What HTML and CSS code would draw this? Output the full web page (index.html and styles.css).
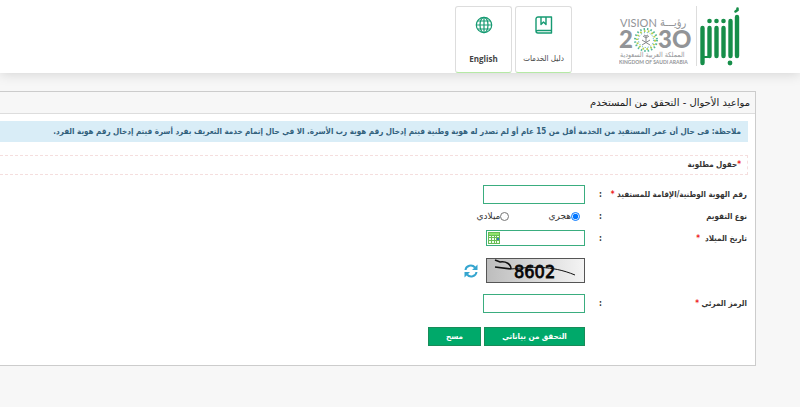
FILE: index.html
```
<!DOCTYPE html>
<html lang="ar" dir="rtl">
<head>
  <meta charset="utf-8">
  <title>مواعيد الأحوال - التحقق من المستخدم</title>
  <link rel="stylesheet" href="styles.css">
</head>
<body>
  <header class="header">
    <div class="logos">
      <svg class="absher" viewBox="0 0 40 60" role="img" aria-label="أبشر">
        <g fill="none" stroke="#168e49" stroke-width="4.4" stroke-linecap="round">
          <path d="M2.500 22V57"/>
          <path d="M9.500 22V50"/>
          <path d="M16.500 22V50"/>
          <path d="M23.500 22V50"/>
          <path d="M30.500 15V50"/>
          <path d="M37 11V50"/>
          <path d="M3 51H8" stroke-width="2"/>
          <path d="M35.500 5.500L37.500 4V2.500" stroke-width="2.600"/>
        </g>
        <g fill="#168e49">
          <circle cx="9.500" cy="15" r="2.300"/>
          <circle cx="16.500" cy="15" r="2.300"/>
          <circle cx="23.500" cy="15" r="2.300"/>
          <circle cx="30" cy="57" r="2.400"/>
        </g>
      </svg>
      <svg class="vision" viewBox="0 0 74 52" direction="ltr" role="img" aria-label="رؤية 2030">
        <g fill="#929497">
          <text x="1" y="13" font-size="11">VISION</text>
          <text class="ar" x="41" y="12" font-size="11">رؤيـــة</text>
          <text x="0" y="34" font-size="24" font-weight="900">2</text>
          <text x="39" y="34" font-size="24" font-weight="900">3O</text>
          <text class="ar" x="1" y="43" font-size="7">المملكة العربية السعودية</text>
          <text x="0" y="50" font-size="5" font-weight="bold">KINGDOM OF SAUDI ARABIA</text>
        </g>
        <g fill="none" stroke-width="2">
          <circle cx="27" cy="26" r="11" stroke="#56b99c" stroke-dasharray="1.5 2"/>
          <circle cx="27" cy="26" r="9" stroke="#b5cf4b" stroke-dasharray="1.6 2.4"/>
          <circle cx="27" cy="26" r="7.5" stroke="#3aa3c4" stroke-width="1" stroke-dasharray="1 2"/>
        </g>
        <g fill="none" stroke="#85888b">
          <path d="M27 28V22M27 24L24 22M27 24L30 22M25 21L27 22L29 21"/>
          <path d="M23 31L31 26M31 31L23 26"/>
        </g>
      </svg>
    </div>
    <nav class="nav">
      <a class="tile" href="#">
        <svg class="tile-icon" viewBox="0 0 18 18" fill="none" stroke="#169a72" stroke-width="1.4" stroke-linejoin="round">
          <path d="M16.500 14.500V1H3C2 1 1 1.700 1 3V15C1 16.500 2 17 3 17H16.500V14.500H3C1.800 14.500 1 15 1 15.700"/>
          <path d="M6 1V8.500L8.500 6L11 8.500V1"/>
        </svg>
        <span>دليل الخدمات</span>
      </a>
      <a class="tile" href="#">
        <svg class="tile-icon" viewBox="0 0 18 18" fill="none" stroke="#169a72" stroke-width="1.2">
          <circle cx="9" cy="9" r="7.700"/>
          <ellipse cx="9" cy="9" rx="4" ry="7.700"/>
          <path d="M9 1V17M1.300 9H16.700M2.500 5H15.500M2.500 13H15.500"/>
        </svg>
        <span class="english" lang="en">English</span>
      </a>
    </nav>
  </header>

  <main class="panel">
    <h1 class="panel-title">مواعيد الأحوال - التحقق من المستخدم</h1>
    <div class="panel-body">
      <p class="note">ملاحظة: فى حال أن عمر المستفيد من الخدمة أقل من 15 عام أو لم تصدر له هوية وطنية فيتم إدخال رقم هوية رب الأسرة. الا في حال إتمام خدمة التعريف بفرد أسرة فيتم إدخال رقم هوية الفرد.</p>
      <p class="required-note"><span class="star">*</span>حقول مطلوبة</p>

      <form class="form">
        <div class="row">
          <label class="label" for="id-number">رقم الهوية الوطنية/الإقامة للمستفيد <span class="star">*</span></label>
          <span class="colon">:</span>
          <input class="text-input" type="text" id="id-number">
        </div>
        <div class="row" role="radiogroup" aria-labelledby="calendar-label">
          <span class="label" id="calendar-label">نوع التقويم</span>
          <span class="colon">:</span>
          <div class="radios">
            <label class="radio"><input type="radio" name="calendar" checked>هجري</label>
            <label class="radio"><input type="radio" name="calendar">ميلادي</label>
          </div>
        </div>
        <div class="row">
          <label class="label" for="birth-date">تاريخ الميلاد &nbsp;<span class="star">*</span></label>
          <span class="colon">:</span>
          <div class="date-box">
            <input class="date-input" type="text" id="birth-date">
            <button class="icon-button" type="button" aria-label="التقويم">
              <svg class="calendar-icon" viewBox="0 0 12 12">
                <rect width="12" height="12" fill="#69bd55"/>
                <rect x="1" y="1" width="10" height="2" fill="#8ee36c"/>
                <path d="M1 4h2v1H1zM4 4h2v1H4zM7 4h1v1H7zM9 4h2v1H9zM1 6h2v2H1zM4 6h2v2H4zM7 6h1v2H7zM1 9h2v2H1zM4 9h2v2H4zM7 9h1v2H7zM9 9h2v2H9z" fill="#f2fff0"/>
                <path d="M9 6h2v2H9z" fill="#3976c8"/>
              </svg>
            </button>
          </div>
        </div>
        <div class="row captcha-row">
          <svg class="captcha" viewBox="0 0 99 25" direction="ltr" role="img" aria-label="8602">
            <defs>
              <linearGradient id="shade">
                <stop offset="0" stop-color="#bdbdbd"/>
                <stop offset="1" stop-color="#f4f4f4"/>
              </linearGradient>
            </defs>
            <rect x="0.500" y="0.500" width="98" height="24" fill="url(#shade)" stroke="#555"/>
            <text x="28" y="20" font-size="18" stroke="#0b0b0b" stroke-width="0.800">8602</text>
            <path d="M9 2L14 4C20 3 25 6 25 11M9 9L25 11" fill="none" stroke="#111" stroke-width="1.600"/>
            <path d="M25 11C45 9 65 7 89 17" fill="none" stroke="#111"/>
          </svg>
          <button class="icon-button" type="button" aria-label="تحديث الرمز">
            <svg class="refresh-icon" viewBox="0 0 14 14" fill="none" stroke="#35a5cf" stroke-width="2">
              <path d="M1.500 6C2 1.500 8 0 11 3.500"/>
              <path d="M12.500 8C12 12.500 6 14 3 10.500"/>
              <path d="M13.500 0.500V6H8ZM0.500 13.500V8H6Z" fill="#35a5cf" stroke="none"/>
            </svg>
          </button>
        </div>
        <div class="row">
          <label class="label" for="captcha-code">الرمز المرئي <span class="star">*</span></label>
          <span class="colon">:</span>
          <input class="text-input" type="text" id="captcha-code">
        </div>
        <div class="row actions">
          <button class="button button-main" type="submit">التحقق من بياناتي</button>
          <button class="button" type="reset">مسح</button>
        </div>
      </form>
    </div>
  </main>
</body>
</html>
```
FILE: styles.css
```
* {
  box-sizing: border-box;
}

body {
  margin: 0;
  background: #f7f7f7;
  color: #333;
  font-family: "DejaVu Sans Condensed", "DejaVu Sans", sans-serif;
  font-size: 8px;
}

.header {
  display: flex;
  align-items: flex-start;
  gap: 47px;
  padding: 6px 60px 0 0;
  height: 73px;
  background: #fff;
  box-shadow: 0 1px 12px rgba(0, 0, 0, 0.15);
}

.logos {
  display: flex;
  gap: 3px;
}

.absher {
  width: 40px;
  height: 60px;
}

.vision {
  box-sizing: content-box;
  width: 74px;
  height: 52px;
  padding: 8px 3px 0 0;
  border-right: 1px solid #ddd;
  font-family: Lato, sans-serif;
}

.vision .ar {
  font-family: "DejaVu Sans Condensed", "DejaVu Sans", sans-serif;
}

.nav {
  display: flex;
  gap: 3px;
}

.tile {
  display: flex;
  flex-direction: column;
  align-items: center;
  justify-content: space-between;
  width: 57px;
  height: 67px;
  padding: 9px 0;
  border: 1px solid #ddd;
  border-bottom-color: #b5e9a5;
  border-radius: 3px;
  background: #fff;
  color: #444;
  text-decoration: none;
  white-space: nowrap;
}

.tile-icon {
  width: 18px;
  height: 18px;
}

.english {
  font-family: "Open Sans", sans-serif;
  font-weight: bold;
  line-height: 9px;
}

.panel {
  margin: 18px 44px 0 0;
  border: 1px solid #ccc;
  border-left: 0;
  background: #fff;
}

.panel-title {
  margin: 0;
  padding: 0 5px;
  border-bottom: 1px solid #ddd;
  background: #f7f7f7;
  color: #222;
  font-family: "DejaVu Sans", sans-serif;
  font-size: 10px;
  font-weight: normal;
  line-height: 21px;
}

.panel-body {
  padding: 7px 7px 18px 0;
}

.note {
  margin: 0 0 13px;
  padding: 0 7px;
  background: #d9edf7;
  color: #31607c;
  font-weight: bold;
  line-height: 21px;
  white-space: nowrap;
}

.required-note {
  margin: 0 0 8px;
  padding: 0 6px;
  border: 1px dashed #f5dede;
  border-left: 0;
  font-weight: bold;
  line-height: 18px;
}

.star {
  color: #e22;
}

.row {
  display: flex;
  align-items: center;
  min-height: 22px;
  padding-right: 1px;
}

.label {
  width: 145px;
  font-weight: bold;
  white-space: nowrap;
}

.colon {
  width: 17px;
  font-weight: bold;
}

.text-input {
  width: 102px;
  height: 19px;
  border: 1px solid #3aad7f;
  background: #fff;
}

.radios {
  display: flex;
  gap: 39px;
  padding-right: 5px;
  font-family: "DejaVu Sans", sans-serif;
}

.radio {
  display: flex;
  align-items: center;
  font-size: 9px;
}

.radio input {
  width: 9px;
  height: 9px;
  margin: 0;
}

.date-box {
  display: flex;
  align-items: center;
  width: 99px;
  height: 16px;
  padding-left: 1px;
  border: 1px solid #3aad7f;
}

.date-input {
  flex: 1;
  min-width: 0;
  height: 14px;
  padding: 0 2px;
  border: 0;
}

.icon-button {
  display: flex;
  padding: 0;
  border: 0;
  background: none;
  cursor: pointer;
}

.calendar-icon {
  width: 12px;
  height: 12px;
}

.captcha-row {
  gap: 8px;
  min-height: 43px;
  padding-right: 163px;
}

.captcha {
  width: 99px;
  height: 25px;
}

.refresh-icon {
  width: 14px;
  height: 14px;
}

.actions {
  gap: 3px;
  margin-top: 11px;
  padding-right: 163px;
}

.button {
  width: 53px;
  height: 19px;
  padding: 0;
  border: 1px solid #188c59;
  background: #00a96a;
  color: #fff;
  font: bold 8px "DejaVu Sans Condensed", "DejaVu Sans", sans-serif;
  white-space: nowrap;
  cursor: pointer;
}

.button-main {
  width: 101px;
}
```
